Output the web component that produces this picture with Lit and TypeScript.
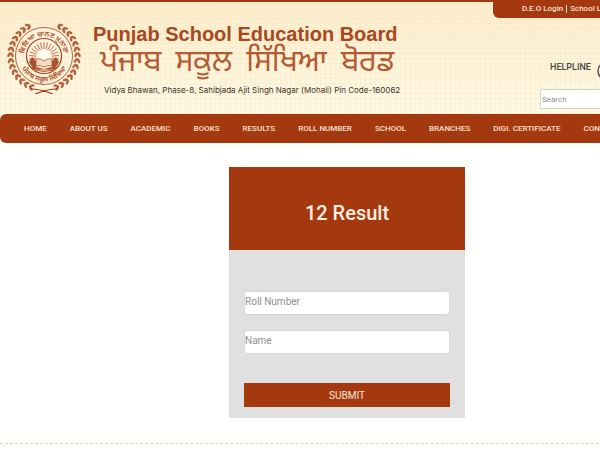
import { LitElement, html, css, svg } from "lit";
import { customElement } from "lit/decorators.js";

const RUST = "#a3401c";

@customElement("board-seal")
class BoardSeal extends LitElement {
  static styles = css`
    :host { display: block; flex: none; }
    svg { display: block; }
    text { font-family: "Noto Sans Gurmukhi", "Noto Sans", "DejaVu Sans", sans-serif; font-size: 7px; font-weight: 700; fill: #b05a38; }
  `;

  private leafRing() {
    const out = [];
    for (let i = 0; i < 14; i++) {
      const a = 28 + i * 10;
      for (const flip of [1, -1]) {
        const rad = (a * Math.PI) / 180;
        for (const [r, tilt] of [[32, 30], [35, -30]]) {
          const x = 38 + flip * Math.sin(rad) * r;
          const y = 38 - Math.cos(rad) * r;
          out.push(svg`<ellipse cx=${x} cy=${y} rx="2.7" ry="1.3" transform="rotate(${flip * (a + tilt)} ${x} ${y})" fill=${RUST} opacity="0.8"></ellipse>`);
        }
      }
    }
    return out;
  }

  private rays() {
    return Array.from({ length: 15 }, (_, i) => {
      const a = ((-98 + i * 14) * Math.PI) / 180;
      return svg`<line x1=${38 + Math.sin(a) * 8} y1=${39 - Math.cos(a) * 8} x2=${38 + Math.sin(a) * 15} y2=${39 - Math.cos(a) * 15} stroke=${RUST} stroke-width="1" opacity="0.7"></line>`;
    });
  }

  render() {
    return html`<svg width="76" height="76" viewBox="0 0 76 76" role="img" aria-label="Board seal">
      <defs>
        <path id="top" d="M18.2 41A20 20 0 1 1 57.8 41"></path>
        <path id="bottom" d="M12.5 38A25.5 25.5 0 0 0 63.5 38"></path>
      </defs>
      ${this.leafRing()}
      <circle cx="38" cy="38" r="28.5" fill="#fdf3da" stroke=${RUST} stroke-width="0.8"></circle>
      <circle cx="38" cy="38" r="17.5" fill="none" stroke=${RUST} stroke-width="1.2"></circle>
      ${this.rays()}
      <circle cx="38" cy="37" r="6" fill="#fffaf0"></circle>
      <path d="M23 44l3-5 4 4v6l8 2 8-2v-6l4-4 3 5-4 7H27z" fill=${RUST} opacity="0.9"></path>
      <path d="M30 41q5-1 8 2 3-3 8-2v7q-5-1-8 1-3-2-8-1z" fill="#f5dcc0" stroke=${RUST} stroke-width="0.7"></path>
      <path d="M25 50q13 4 26 0M28 52q10 3 20 0" fill="none" stroke=${RUST} stroke-width="0.8"></path>
      <text><textPath href="#top" startOffset="50%" text-anchor="middle">ਵਿਦਿਆ ਚਾਨਣ ਮੁਨਾਰਾ</textPath></text>
      <text><textPath href="#bottom" startOffset="50%" text-anchor="middle">ਪੰਜਾਬ ਸਕੂਲ ਸਿੱਖਿਆ</textPath></text>
      <path d="M24 71q10 0 23 5M52 71q-10 0-23 5" fill="none" stroke=${RUST} stroke-width="1.2"></path>
    </svg>`;
  }
}

@customElement("app-root")
class AppRoot extends LitElement {
  static styles = css`
    :host {
      display: block;
      overflow: hidden;
      min-height: 100vh;
      background: #fffffd;
      font-family: Roboto, "Liberation Sans", sans-serif;
      --rust: #a4390f;
    }
    * { box-sizing: border-box; }
    a { color: inherit; text-decoration: none; }
    .page { min-width: 694px; }
    header {
      display: flex;
      justify-content: space-between;
      height: 114px;
      border-top: 2px solid var(--rust);
      background:
        repeating-linear-gradient(90deg, #f3dfb038 0 1px, transparent 1px 5px),
        repeating-linear-gradient(0deg, #f3dfb038 0 1px, transparent 1px 5px),
        linear-gradient(#fcedcb, #fef8e4);
    }
    .brand { display: flex; gap: 10px; padding: 16px 0 0 6px; }
    .names { display: flex; flex-direction: column; white-space: nowrap; padding-top: 3px; }
    h1 {
      margin: 0 0 0 1px;
      font: 700 20px/26px "Liberation Sans", Arial, sans-serif;
      color: #a8481f;
    }
    .local {
      display: flex;
      gap: 14px;
      margin: 0 0 0 8px;
      font: 400 30px/34px "Noto Sans Gurmukhi", "Noto Sans", sans-serif;
      color: #b25a32;
    }
    .address {
      margin: 0 0 0 12px;
      font: 400 8px/18px Inter, "Liberation Sans", sans-serif;
      color: #40342c;
    }
    .side { display: flex; flex-direction: column; width: 201px; }
    .login {
      display: flex;
      align-items: center;
      height: 16px;
      flex: none;
      padding: 0 0 3px 29px;
      border-radius: 0 0 0 6px;
      background: var(--rust);
      color: #fbe3d4;
      font-size: 8px;
      line-height: 8px;
      font-weight: 500;
      white-space: nowrap;
    }
    .login a + a { margin-left: 3px; padding-left: 3px; border-left: 1px solid #fbe3d4; }
    .help {
      display: flex;
      align-items: center;
      gap: 6px;
      padding: 34px 0 0 57px;
      height: 71px;
      font-size: 9px;
      font-weight: 500;
      color: #4a463c;
    }
    .help span { padding-bottom: 8px; }
    .help svg { flex: none; }
    .search {
      width: 144px;
      height: 20px;
      flex: none;
      margin-left: 47px;
      padding: 0 1px;
      border: 1px solid #d3d3cd;
      border-radius: 2px;
      background: #fffffd;
      font: 400 8px Roboto, sans-serif;
    }
    nav {
      display: flex;
      align-items: center;
      gap: 23px;
      height: 29px;
      padding: 0 24px;
      border-radius: 6px;
      background: var(--rust);
      color: #fbe0d0;
      font-size: 8px;
      font-weight: 500;
      white-space: nowrap;
    }
    main { padding: 24px 0 25px; border-bottom: 1px dashed #d5d3bd; }
    form { width: 34%; margin: 0 auto; background: #e0e0e0; }
    h2 {
      display: flex;
      align-items: center;
      justify-content: center;
      height: 83px;
      margin: 0;
      padding-top: 8px;
      background: var(--rust);
      color: #fdeee4;
      font-size: 20px;
      font-weight: 500;
      line-height: 24px;
    }
    .fields { display: flex; flex-direction: column; gap: 15px; padding: 41px 15px 11px; }
    .fields input {
      width: 100%;
      height: 24px;
      padding: 0 0 3px;
      border: 1px solid #d8d8d8;
      border-radius: 3px;
      background: #fff;
      font: 400 10px Roboto, sans-serif;
    }
    input::placeholder { color: #8f8f8f; opacity: 1; }
    button {
      height: 24px;
      margin-top: 14px;
      padding: 0;
      border: 0;
      background: var(--rust);
      color: #fbe6da;
      font: 400 10px Roboto, sans-serif;
    }
  `;

  private links = ["Home", "About Us", "Academic", "Books", "Results", "Roll Number", "School", "Branches", "Digi. Certificate", "Contact Us"];

  render() {
    return html`<div class="page">
      <header>
        <div class="brand">
          <board-seal></board-seal>
          <div class="names">
            <h1>Punjab School Education Board</h1>
            <p class="local" lang="pa"><span>ਪੰਜਾਬ</span> <span>ਸਕੂਲ</span> <span>ਸਿੱਖਿਆ</span> <span>ਬੋਰਡ</span></p>
            <p class="address">Vidya Bhawan, Phase-8, Sahibjada Ajit Singh Nagar (Mohali) Pin Code-160062</p>
          </div>
        </div>
        <div class="side">
          <div class="login"><a href="#deo">D.E.O Login</a><a href="#school">School Login</a></div>
          <div class="help">
            <span>HELPLINE</span>
            <svg width="20" height="20" viewBox="0 0 20 20"><circle cx="10" cy="10" r="9" fill="none" stroke="#4a463c" stroke-width="1.4"></circle></svg>
          </div>
          <input class="search" type="search" placeholder="Search" aria-label="Search">
        </div>
      </header>
      <nav>${this.links.map((l) => html`<a href="#">${l.toUpperCase()}</a>`)}</nav>
      <main>
        <form @submit=${(e: Event) => e.preventDefault()}>
          <h2>12 Result</h2>
          <div class="fields">
            <input type="text" placeholder="Roll Number" aria-label="Roll Number">
            <input type="text" placeholder="Name" aria-label="Name">
            <button type="submit">SUBMIT</button>
          </div>
        </form>
      </main>
    </div>`;
  }
}
